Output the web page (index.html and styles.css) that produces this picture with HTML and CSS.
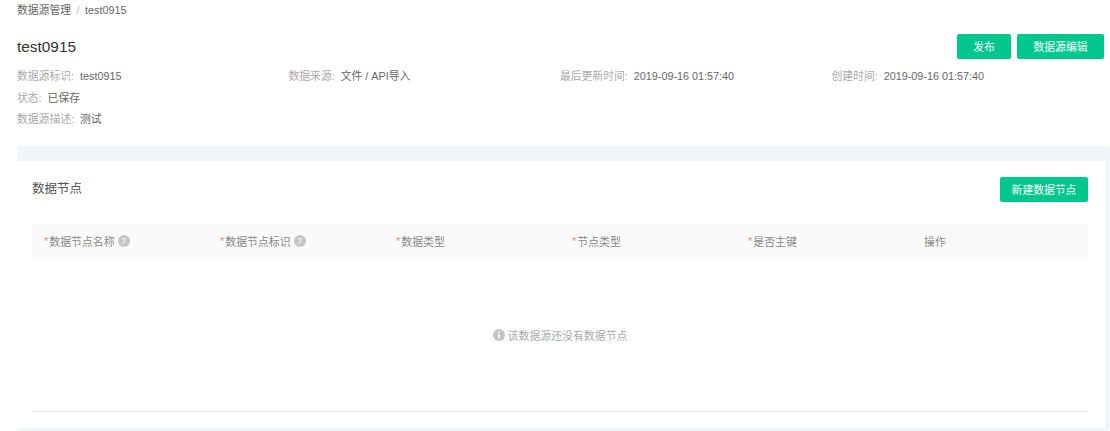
FILE: index.html
```html
<!DOCTYPE html>
<html lang="zh-CN">
<head>
    <meta charset="UTF-8">
    <title>test0915</title>
    <link rel="stylesheet" href="styles.css">
</head>
<body>

<div class="breadcrumb">
    <span>数据源管理</span>
    <span class="sep">/</span>
    <span class="current">test0915</span>
</div>

<div class="title-row">
    <h1>test0915</h1>
    <div class="actions">
        <button class="btn btn-short">发布</button>
        <button class="btn btn-edit">数据源编辑</button>
    </div>
</div>

<div class="meta">
    <div class="meta-item"><span class="label">数据源标识:</span>test0915</div>
    <div class="meta-item"><span class="label">数据来源:</span>文件 / API导入</div>
    <div class="meta-item"><span class="label">最后更新时间:</span>2019-09-16 01:57:40</div>
    <div class="meta-item"><span class="label">创建时间:</span>2019-09-16 01:57:40</div>
</div>
<div class="meta-line"><span class="label">状态:</span>已保存</div>
<div class="meta-line"><span class="label">数据源描述:</span>测试</div>

<div class="content">
    <div class="card">
        <div class="card-head">
            <h2>数据节点</h2>
            <button class="btn btn-new">新建数据节点</button>
        </div>

        <div class="table-head">
            <div class="col"><span class="req">*</span>数据节点名称<span class="help">?</span></div>
            <div class="col"><span class="req">*</span>数据节点标识<span class="help">?</span></div>
            <div class="col"><span class="req">*</span>数据类型</div>
            <div class="col"><span class="req">*</span>节点类型</div>
            <div class="col"><span class="req">*</span>是否主键</div>
            <div class="col">操作</div>
        </div>

        <div class="empty">
            <svg class="info" viewBox="0 0 12 12" width="12" height="12">
                <circle cx="6" cy="6" r="6" fill="#c4c4c4"/>
                <rect x="5.2" y="2.4" width="1.6" height="1.6" fill="#fff"/>
                <rect x="5.2" y="5" width="1.6" height="4.6" fill="#fff"/>
            </svg>
            <span>该数据源还没有数据节点</span>
        </div>
    </div>
</div>

</body>
</html>
```

FILE: styles.css
```css
html, body {
    height: 100%;
}

body {
    margin: 0;
    overflow: hidden;
    background-color: #fff;
    color: #666;
    font-family: "Liberation Sans", "Noto Sans CJK SC", sans-serif;
    font-size: 10.8px;
}

.breadcrumb {
    padding: 3px 0 0 17px;
    height: 15px;
    line-height: 14px;
}

.breadcrumb .sep {
    margin: 0 2.5px;
    color: #bbb;
}

.title-row {
    display: flex;
    justify-content: space-between;
    align-items: center;
    height: 25px;
    margin-top: 16px;
    padding: 0 6px 0 17px;
}

h1 {
    margin: 0;
    font-size: 15.4px;
    font-weight: normal;
    color: #333;
}

.actions {
    display: flex;
    gap: 6px;
}

.btn {
    height: 25px;
    padding: 0 0 1px;
    border: 0;
    border-radius: 2px;
    background-color: #00c78e;
    color: #fff;
    font-family: inherit;
    font-size: 10.8px;
}

.btn-short {
    width: 54px;
}

.btn-edit {
    width: 87px;
}

.btn-new {
    width: 88px;
}

.meta {
    display: grid;
    grid-template-columns: repeat(4, 271.5px);
    margin: 9px 0 0 17px;
    line-height: 16px;
}

.meta-line {
    margin: 6px 0 0 17px;
    line-height: 16px;
}

.meta-line + .meta-line {
    margin-top: 5px;
}

.label {
    margin-right: 6px;
    color: #aaa;
}

.content {
    margin: 19px 0 0 17px;
    padding: 15px 5px 3px 0;
    height: 267px;
    background-color: #f3f6f9;
}

.card {
    height: 267px;
    box-sizing: border-box;
    padding: 16px 17px 0 15px;
    background-color: #fff;
}

.card-head {
    display: flex;
    justify-content: space-between;
    align-items: center;
    height: 25px;
}

h2 {
    margin: 0 0 5px;
    font-size: 12.5px;
    font-weight: normal;
    color: #555;
}

.table-head {
    display: grid;
    grid-template-columns: repeat(6, 176px);
    height: 35px;
    margin-top: 22px;
    align-items: center;
    background-color: #fafafa;
    font-size: 10.9px;
    color: #888;
}

.col {
    display: flex;
    align-items: center;
    padding: 0 0 2px 12px;
}

.req {
    color: #f8878f;
    margin-right: 1px;
}

.help {
    width: 12px;
    height: 12px;
    margin-left: 3px;
    border-radius: 50%;
    background-color: #c4c4c4;
    color: #fff;
    font-size: 9px;
    line-height: 12px;
    text-align: center;
}

.empty {
    display: flex;
    justify-content: center;
    align-items: center;
    gap: 3px;
    height: 152px;
    border-bottom: 1px solid #eee;
    color: #aaa;
    font-size: 10.9px;
}
```
